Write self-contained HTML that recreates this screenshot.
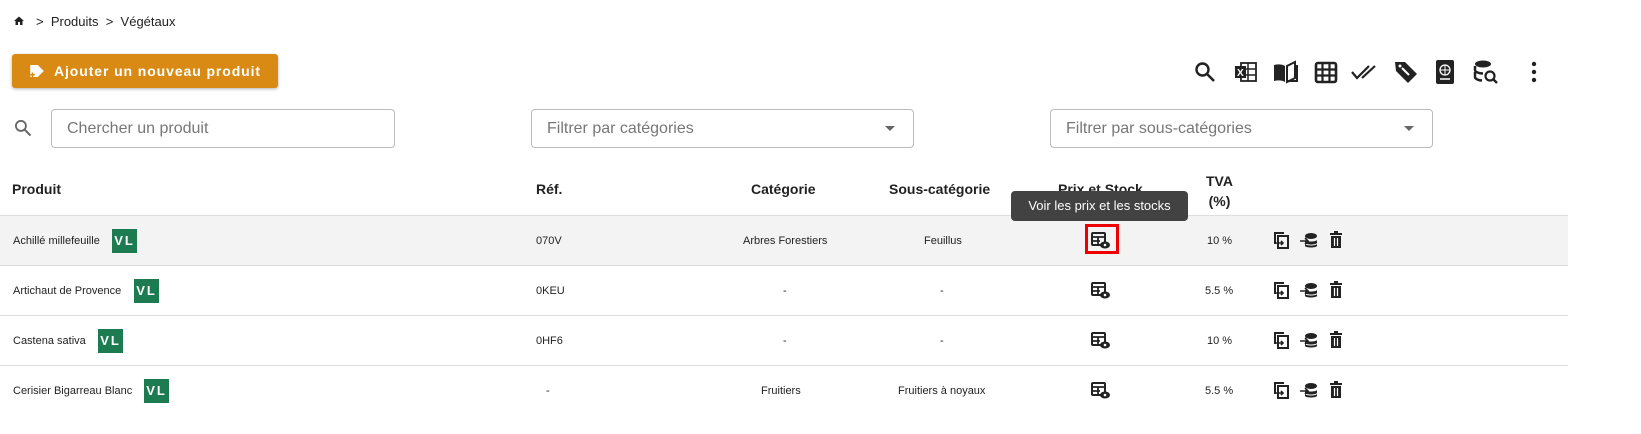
<!DOCTYPE html>
<html><head><meta charset="utf-8"><style>
*{box-sizing:border-box;margin:0;padding:0}
body{width:1641px;height:434px;background:#fff;font-family:"Liberation Sans",sans-serif;color:#222;position:relative;overflow:hidden}
.a{position:absolute}
.btn{left:12px;top:54px;width:266px;height:34px;background:#d98a14;border-radius:3px;box-shadow:0 1px 3px rgba(0,0,0,.3);color:#fff;font-weight:bold;font-size:14px;letter-spacing:0.9px;line-height:34px;padding-left:42px;white-space:nowrap}
.inp{height:39px;border:1px solid #bbb;border-radius:4px;font-size:16px;color:#777;line-height:37px;padding-left:15px}
.th{font-weight:bold;font-size:14px;color:#222}
.row{left:0;width:1568px;height:50px;border-top:1px solid #ddd}
.c{position:absolute;font-size:11px;top:19px}
.vl{position:absolute;width:25px;height:24px;background:#1d7b52;color:#fff;font-weight:bold;font-size:13px;text-align:center;line-height:24px;letter-spacing:2px;top:13px}
</style></head><body>
<svg class="a" style="left:13px;top:15px" width="12" height="12" viewBox="0 0 24 24"><path d="M10 20v-6h4v6h5v-8h3L12 3 2 12h3v8z" fill="#222"/></svg>
<div class="a" style="left:36px;top:14px;font-size:13px">&gt;&nbsp;&nbsp;Produits&nbsp;&nbsp;&gt;&nbsp;&nbsp;Végétaux</div>
<div class="a btn">Ajouter un nouveau produit</div>
<svg class="a" style="left:28px;top:62px" width="18" height="18" viewBox="0 0 24 24"><path d="M3 4h10l8 8-8 8H3z" fill="#fff"/><path d="M6 14v6M3 17h6" stroke="#d98a14" stroke-width="2"/></svg>
<svg class="a" style="left:1193px;top:60px" width="24" height="24" viewBox="0 0 24 24"><circle cx="9.5" cy="9.5" r="6" fill="none" stroke="#222" stroke-width="2.4"/><path d="M14 14l7 7" stroke="#222" stroke-width="2.6"/></svg>
<svg class="a" style="left:1233px;top:60px" width="26" height="24" viewBox="0 0 26 24"><rect x="8" y="3" width="15" height="18" fill="none" stroke="#222" stroke-width="1.8"/><path d="M8 9h15M8 15h15M15 3v18" stroke="#222" stroke-width="1.5"/><rect x="2" y="6" width="11" height="12" fill="#222"/><text x="4" y="16" font-size="10" fill="#fff" font-family="Liberation Sans" font-weight="bold">X</text></svg>
<svg class="a" style="left:1272px;top:60px" width="28" height="24" viewBox="0 0 28 24"><path d="M2 5c4-1 8-1 11 1v16c-3-2-7-2-11-1z" fill="#222"/><path d="M15 6l8-4v16l-8 4z" fill="none" stroke="#222" stroke-width="2"/><path d="M25 5v16h-10" fill="none" stroke="#222" stroke-width="2"/></svg>
<svg class="a" style="left:1314px;top:61px" width="24" height="23" viewBox="0 0 24 23"><rect x="2" y="2" width="20" height="19" rx="2" fill="none" stroke="#222" stroke-width="2.6"/><path d="M2 8.5h20M2 14.5h20M8.5 2v19M15.5 2v19" stroke="#222" stroke-width="2.2"/></svg>
<svg class="a" style="left:1350px;top:62px" width="30" height="20" viewBox="0 0 30 20"><path d="M2 10l5 6 12-12M12 16l13-12" fill="none" stroke="#222" stroke-width="2.2"/></svg>
<svg class="a" style="left:1392px;top:58px" width="28" height="28" viewBox="0 0 28 28"><path d="M3 4h10l12 12-9 9L4 13z" fill="#222"/><path d="M10 10l7 7" stroke="#fff" stroke-width="2"/><circle cx="8" cy="8" r="1.5" fill="#fff"/></svg>
<svg class="a" style="left:1434px;top:59px" width="22" height="26" viewBox="0 0 22 26"><rect x="2" y="1" width="18" height="24" rx="2" fill="#222"/><circle cx="11" cy="11" r="5" fill="none" stroke="#fff" stroke-width="1.3"/><path d="M6 11h10M11 6v10" stroke="#fff" stroke-width="1"/><path d="M6 20h10" stroke="#fff" stroke-width="1.5"/></svg>
<svg class="a" style="left:1473px;top:59px" width="26" height="26" viewBox="0 0 26 26"><ellipse cx="10" cy="5" rx="8" ry="3.5" fill="#222"/><path d="M2 7v4c0 2 4 3.5 8 3.5M2 13v5c0 2 4 3.5 7 3.5" fill="none" stroke="#222" stroke-width="2.5"/><circle cx="17" cy="17" r="4.5" fill="none" stroke="#222" stroke-width="2.2"/><path d="M20 20l4 4" stroke="#222" stroke-width="2.4"/></svg>
<svg class="a" style="left:1530px;top:61px" width="8" height="22" viewBox="0 0 8 22"><circle cx="4" cy="3" r="2.2" fill="#222"/><circle cx="4" cy="11" r="2.2" fill="#222"/><circle cx="4" cy="19" r="2.2" fill="#222"/></svg>
<svg class="a" style="left:13px;top:118px" width="20" height="20" viewBox="0 0 24 24"><circle cx="9.5" cy="9.5" r="6" fill="none" stroke="#666" stroke-width="2.2"/><path d="M14 14l7 7" stroke="#666" stroke-width="2.4"/></svg>
<div class="a inp" style="left:51px;top:109px;width:344px">Chercher un produit</div>
<div class="a inp" style="left:531px;top:109px;width:383px">Filtrer par catégories</div>
<div class="a" style="left:885px;top:126px;border:5px solid transparent;border-top-color:#666"></div>
<div class="a inp" style="left:1050px;top:109px;width:383px">Filtrer par sous-catégories</div>
<div class="a" style="left:1404px;top:126px;border:5px solid transparent;border-top-color:#666"></div>
<div class="a th" style="left:12px;top:181px">Produit</div>
<div class="a th" style="left:536px;top:181px">Réf.</div>
<div class="a th" style="left:751px;top:181px">Catégorie</div>
<div class="a th" style="left:889px;top:181px">Sous-catégorie</div>
<div class="a th" style="left:1058px;top:181px">Prix et Stock</div>
<div class="a th" style="left:1206px;top:171px;text-align:center;line-height:20px">TVA<br>(%)</div>
<div class="a row" style="top:215px;background:#f3f3f3">
<div class="c" style="left:13px">Achillé millefeuille</div><div class="vl" style="left:112px">VL</div>
<div class="c" style="left:536px">070V</div><div class="c" style="left:743px">Arbres Forestiers</div><div class="c" style="left:924px">Feuillus</div>
<div class="c" style="left:1207px">10 %</div></div>
<div class="a row" style="top:265px">
<div class="c" style="left:13px">Artichaut de Provence</div><div class="vl" style="left:134px">VL</div>
<div class="c" style="left:536px">0KEU</div><div class="c" style="left:783px">-</div><div class="c" style="left:940px">-</div>
<div class="c" style="left:1205px">5.5 %</div></div>
<div class="a row" style="top:315px">
<div class="c" style="left:13px">Castena sativa</div><div class="vl" style="left:98px">VL</div>
<div class="c" style="left:536px">0HF6</div><div class="c" style="left:783px">-</div><div class="c" style="left:940px">-</div>
<div class="c" style="left:1207px">10 %</div></div>
<div class="a row" style="top:365px">
<div class="c" style="left:13px">Cerisier Bigarreau Blanc</div><div class="vl" style="left:144px">VL</div>
<div class="c" style="left:546px">-</div><div class="c" style="left:761px">Fruitiers</div><div class="c" style="left:898px">Fruitiers à noyaux</div>
<div class="c" style="left:1205px">5.5 %</div></div>
<div id="icons"></div>
<script>
var tops=[215,265,315,365],h='';
tops.forEach(function(t){
var y=t+16;
h+='<svg class="a" style="left:1091px;top:'+(y+1)+'px" width="20" height="18" viewBox="0 0 20 18"><rect x="1" y="1" width="13" height="12" rx="1" fill="none" stroke="#222" stroke-width="2"/><path d="M1 5h13M1 9h8M7 5v8" stroke="#222" stroke-width="1.8"/><ellipse cx="14" cy="13" rx="5" ry="3.5" fill="#222"/><circle cx="14" cy="13" r="1.3" fill="#fff"/></svg>';
h+='<svg class="a" style="left:1273px;top:'+y+'px" width="17" height="19" viewBox="0 0 17 19"><path d="M11 2H2v11" fill="none" stroke="#222" stroke-width="2"/><rect x="5" y="5" width="10" height="12" fill="none" stroke="#222" stroke-width="2"/><path d="M3 12h7M8 10l2 2-2 2" fill="none" stroke="#222" stroke-width="1.6"/></svg>';
h+='<svg class="a" style="left:1299px;top:'+(y+1)+'px" width="19" height="17" viewBox="0 0 19 17"><ellipse cx="12" cy="4" rx="6" ry="3" fill="#222"/><path d="M6 8c1 2 11 2 12 0v3c-1 2-11 2-12 0zM6 12c1 2 11 2 12 0v2c-1 2-11 2-12 0z" fill="#222"/><path d="M1 9h8M6 6l3 3-3 3" fill="none" stroke="#222" stroke-width="1.6"/></svg>';
h+='<svg class="a" style="left:1329px;top:'+y+'px" width="14" height="18" viewBox="0 0 14 18"><path d="M1 3h12M5 1h4" stroke="#222" stroke-width="2"/><path d="M2 5h10v12H2z" fill="#222"/><path d="M5.5 7v8M8.5 7v8" stroke="#fff" stroke-width="1.2"/></svg>';
});
document.getElementById('icons').innerHTML=h;
</script>
<div class="a" style="left:1085px;top:224px;width:34px;height:30px;border:3px solid #e00"></div>
<div class="a" style="left:1011px;top:191px;width:177px;height:30px;background:#424242;border-radius:4px;color:#fff;font-size:13px;text-align:center;line-height:30px">Voir les prix et les stocks</div>
</body></html>
